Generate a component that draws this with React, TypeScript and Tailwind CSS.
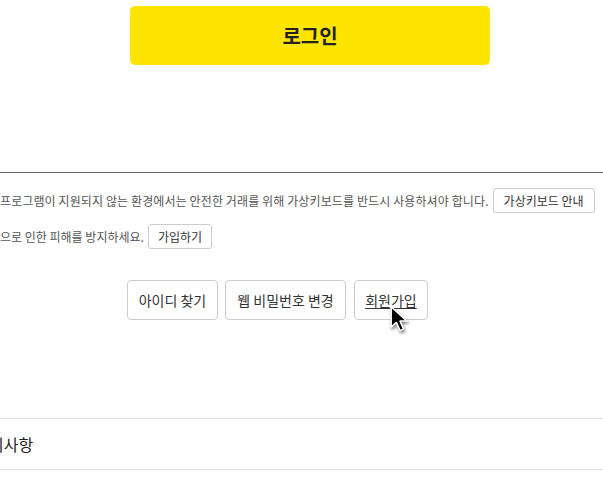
import React from "react";

const font = { fontFamily: '"Noto Sans CJK KR", "Noto Sans", sans-serif' };

function Cursor() {
  return (
    <svg
      className="absolute left-[389px] top-[305px] drop-shadow-[1px_2px_1.5px_rgba(0,0,0,0.5)]"
      width="27"
      height="31"
      viewBox="0 0 22 26"
    >
      <path
        d="M1.5 1.5 L1.5 18.5 L5.8 14.6 L9 21.5 L12 20.2 L8.9 13.5 L14.8 13.5 Z"
        fill="#000"
        stroke="#fff"
        strokeWidth="1.3"
        strokeLinejoin="round"
      />
    </svg>
  );
}

export default function App() {
  return (
    <div className="relative w-[603px] h-[489px] overflow-hidden bg-white" style={font}>
      {/* Login */}
      <div className="pt-[6px]">
        <button className="ml-[130px] w-[360px] h-[59px] rounded-[5px] bg-[#fee500] text-[20px] font-semibold text-[#222]">
          로그인
        </button>
      </div>

      <div className="mt-[107px] border-t border-[#666]" />

      {/* Notice lines */}
      <div className="mt-[15px] text-[12px] text-[#555] leading-none">
        <div className="flex items-center gap-[4px] whitespace-nowrap">
          <span className="tracking-[0.11px]">프로그램이 지원되지 않는 환경에서는 안전한 거래를 위해 가상키보드를 반드시 사용하셔야 합니다.</span>
          <button className="h-[25px] px-[10px] border border-[#ccc] rounded-[3px] bg-white text-[12px] text-[#333]">
            가상키보드 안내
          </button>
        </div>
        <div className="mt-[11px] flex items-center gap-[4px] whitespace-nowrap">
          <span>으로 인한 피해를 방지하세요.</span>
          <button className="h-[25px] px-[9px] border border-[#ccc] rounded-[3px] bg-white text-[12px] text-[#333]">
            가입하기
          </button>
        </div>
      </div>

      {/* Links */}
      <div className="mt-[31px] ml-[127px] flex">
        <button className="w-[91px] h-[40px] border border-[#ccc] rounded-[4px] bg-white text-[14px] text-[#333]">
          아이디 찾기
        </button>
        <button className="ml-[7px] w-[121px] h-[40px] border border-[#ccc] rounded-[4px] bg-white text-[14px] text-[#333]">
          웹 비밀번호 변경
        </button>
        <button className="ml-[8px] w-[74px] h-[40px] border border-[#ccc] rounded-[4px] bg-white text-[14px] text-[#333] underline underline-offset-2">
          회원가입
        </button>
      </div>

      {/* Notice section */}
      <div className="mt-[98px] border-t border-[#e2e2e2]">
        <div className="h-[50px] flex items-center overflow-hidden">
          <span className="-ml-[11px] text-[16px] text-[#222] whitespace-nowrap">지사항</span>
        </div>
        <div className="border-t border-[#e2e2e2]" />
      </div>

      <Cursor />
    </div>
  );
}
